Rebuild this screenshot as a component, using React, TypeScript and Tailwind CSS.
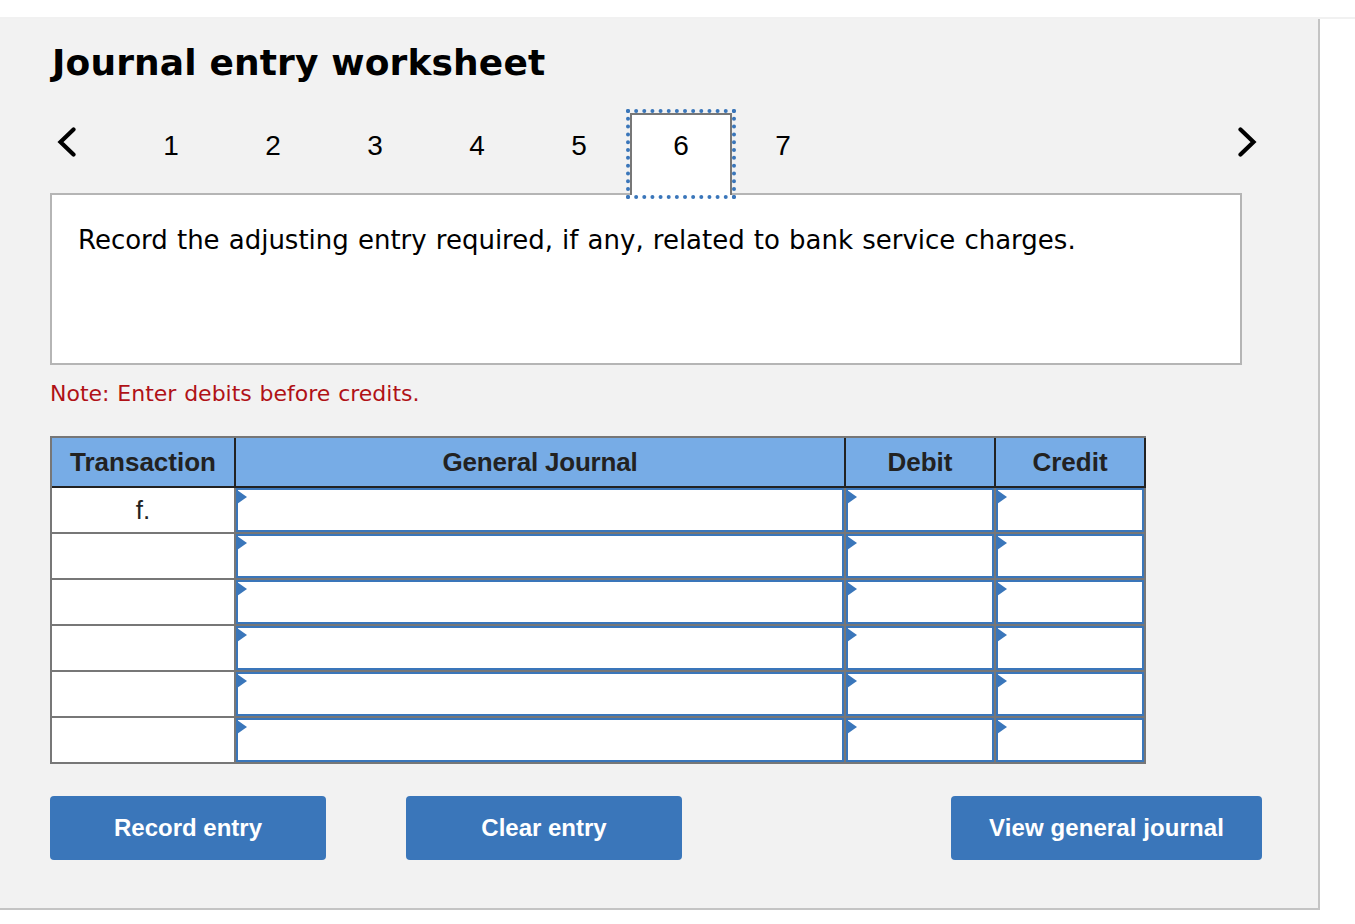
const tabs = [1, 2, 3, 4, 5, 6, 7];
const rows = ["f.", "", "", "", "", ""];

function Chevron({ dir }: { dir: "left" | "right" }) {
  return (
    <svg width="20" height="30" viewBox="0 0 20 30" fill="none" className="block">
      <path
        d={dir === "left" ? "M16.5 2.5 L3.5 15 L16.5 27.5" : "M3.5 2.5 L16.5 15 L3.5 27.5"}
        stroke="#000"
        strokeWidth="4.2"
        strokeLinecap="round"
        strokeLinejoin="miter"
      />
    </svg>
  );
}

function EntryCell({ className }: { className: string }) {
  return (
    <div className={`relative h-full border-r-2 border-[#777] ${className}`}>
      <div className="h-full border-2 border-[#3a76ba] bg-white" />
      <span className="absolute left-px top-0.5 h-0 w-0 border-y-[7px] border-l-[10px] border-y-transparent border-l-[#3a76ba]" />
    </div>
  );
}

function ActionButton({ label, className }: { label: string; className: string }) {
  return (
    <button className={`h-16 rounded bg-[#3a76ba] text-center text-[24px] font-bold text-white font-['Liberation_Sans',Arial,sans-serif] ${className}`}>
      {label}
    </button>
  );
}

export default function App() {
  return (
    <div className="min-h-[924px] bg-white pt-[17px] font-['DejaVu_Sans',Verdana,sans-serif]">
      <div className="border-t-2 border-[#f1f1f1]">
        <div className="h-[891px] w-[1320px] border-r-2 border-b-2 border-[#c4c4c4] bg-[#f2f2f2] pl-[50px] text-black">
          <h1 className="pt-[21px] pl-0.5 text-[36px] leading-[46px] font-bold tracking-[0.14px]">Journal entry worksheet</h1>

          <div className="mt-[27px] flex h-[82px] w-[1212px] font-['Liberation_Sans',Arial,sans-serif] text-[28px]">
            <button className="flex h-[57px] w-[70px] items-center pl-[7px]">
              <Chevron dir="left" />
            </button>
            {tabs.map((t) =>
              t === 6 ? (
                <div
                  key={t}
                  className="relative z-10 flex h-[82px] w-[102px] items-center justify-center border-2 border-b-0 border-[#777] bg-white pb-[18px] outline-4 outline-dotted outline-[#3a76ba]"
                >
                  {t}
                </div>
              ) : (
                <div key={t} className="flex h-[82px] w-[102px] items-center justify-center pb-4">
                  {t}
                </div>
              ),
            )}
            <button className="ml-auto mr-[5px] flex h-[57px] items-center">
              <Chevron dir="right" />
            </button>
          </div>

          <div className="-mt-0.5 h-[172px] w-[1192px] border-2 border-[#b5b5b5] bg-white pt-[27px] pl-[26px] text-[26px] leading-[36px] [word-spacing:0.85px]">
            Record the adjusting entry required, if any, related to bank service charges.
          </div>

          <p className="mt-[14px] text-[22px] leading-[30px] text-[#b01116] [word-spacing:0.8px]">Note: Enter debits before credits.</p>

          <div className="mt-[27px] w-[1096px] border-t-2 border-l-2 border-[#777] bg-white font-['Liberation_Sans',Arial,sans-serif] text-[#222]">
            <div className="flex h-[50px] border-b-2 border-[#222] bg-[#77ace6] text-[26px] font-bold">
              <div className="flex w-[184px] items-center justify-center border-r-2 border-[#222]">Transaction</div>
              <div className="flex w-[610px] items-center justify-center border-r-2 border-[#222] tracking-[-0.2px]">General Journal</div>
              <div className="flex w-[150px] items-center justify-center border-r-2 border-[#222]">Debit</div>
              <div className="flex w-[150px] items-center justify-center border-r-2 border-[#222]">Credit</div>
            </div>
            {rows.map((r, i) => (
              <div key={i} className="flex h-[46px] border-b-2 border-[#777]">
                <div className="flex w-[184px] items-center justify-center border-r-2 border-[#777] text-[26px]">{r}</div>
                <EntryCell className="w-[610px]" />
                <EntryCell className="w-[150px]" />
                <EntryCell className="w-[150px]" />
              </div>
            ))}
          </div>

          <div className="mt-8 flex w-[1212px]">
            <ActionButton label="Record entry" className="w-[276px]" />
            <ActionButton label="Clear entry" className="ml-20 w-[276px]" />
            <ActionButton label="View general journal" className="ml-auto w-[311px] tracking-[0.1px]" />
          </div>
        </div>
      </div>
    </div>
  );
}
